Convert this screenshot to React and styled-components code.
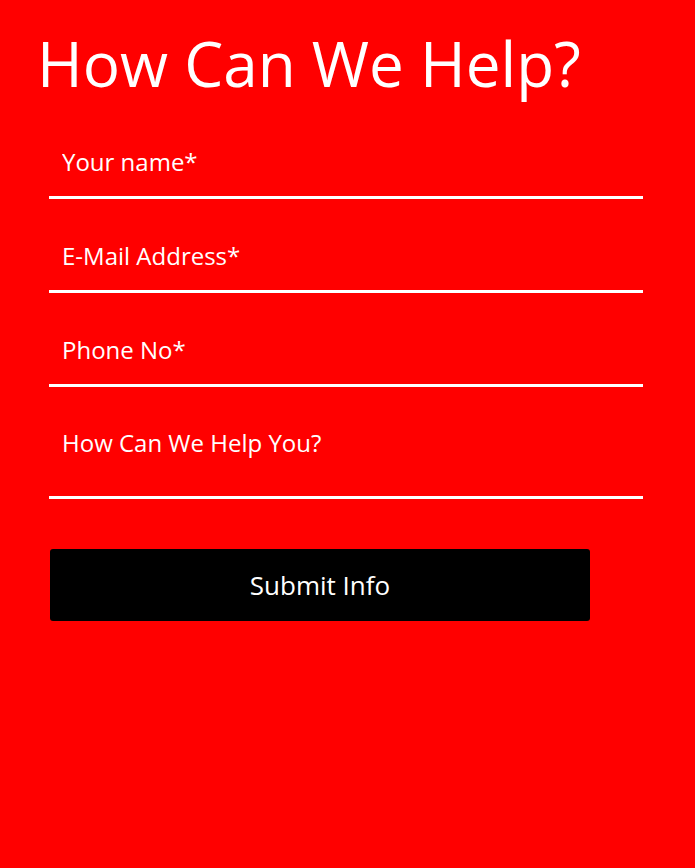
import React from "react";
import styled, { createGlobalStyle } from "styled-components";

const GlobalStyle = createGlobalStyle`
  html, body {
    margin: 0;
    padding: 0;
    background: #ff0000;
  }
  body {
    font-family: "Open Sans", "Liberation Sans", sans-serif;
  }
  * {
    box-sizing: border-box;
  }
`;

const Page = styled.div`
  min-height: 868px;
  background: #ff0000;
  padding: 21px 0 0 37px;
`;

const Title = styled.h1`
  margin: 0;
  font-size: 62px;
  font-weight: 400;
  line-height: normal;
  color: #ffffff;
`;

const Form = styled.form`
  display: flex;
  flex-direction: column;
  width: 594px;
  margin: 22px 0 0 12px;
`;

const Field = styled.input`
  display: block;
  width: 100%;
  height: 72px;
  margin-bottom: 22px;
  padding: 0 13px;
  border: none;
  border-bottom: 3px solid #ffffff;
  background: transparent;
  font-family: inherit;
  font-size: 24px;
  color: #ffffff;
  outline: none;

  &::placeholder {
    color: #ffffff;
    opacity: 1;
  }
`;

const Message = styled.textarea`
  display: block;
  width: 100%;
  height: 90px;
  padding: 17px 13px 0;
  border: none;
  border-bottom: 3px solid #ffffff;
  background: transparent;
  font-family: inherit;
  font-size: 24px;
  color: #ffffff;
  resize: none;
  outline: none;

  &::placeholder {
    color: #ffffff;
    opacity: 1;
  }
`;

const SubmitButton = styled.button`
  width: 540px;
  height: 72px;
  margin: 50px 0 0 1px;
  border: none;
  border-radius: 3px;
  background: #000000;
  color: #ffffff;
  font-family: inherit;
  font-size: 26px;
  cursor: pointer;
`;

const App = () => {
  return (
    <Page>
      <GlobalStyle />
      <Title>How Can We Help?</Title>
      <Form onSubmit={(e) => e.preventDefault()}>
        <Field type="text" placeholder="Your name*" />
        <Field type="email" placeholder="E-Mail Address*" />
        <Field type="tel" placeholder="Phone No*" />
        <Message placeholder="How Can We Help You?" />
        <SubmitButton type="submit">Submit Info</SubmitButton>
      </Form>
    </Page>
  );
};

export default App;
